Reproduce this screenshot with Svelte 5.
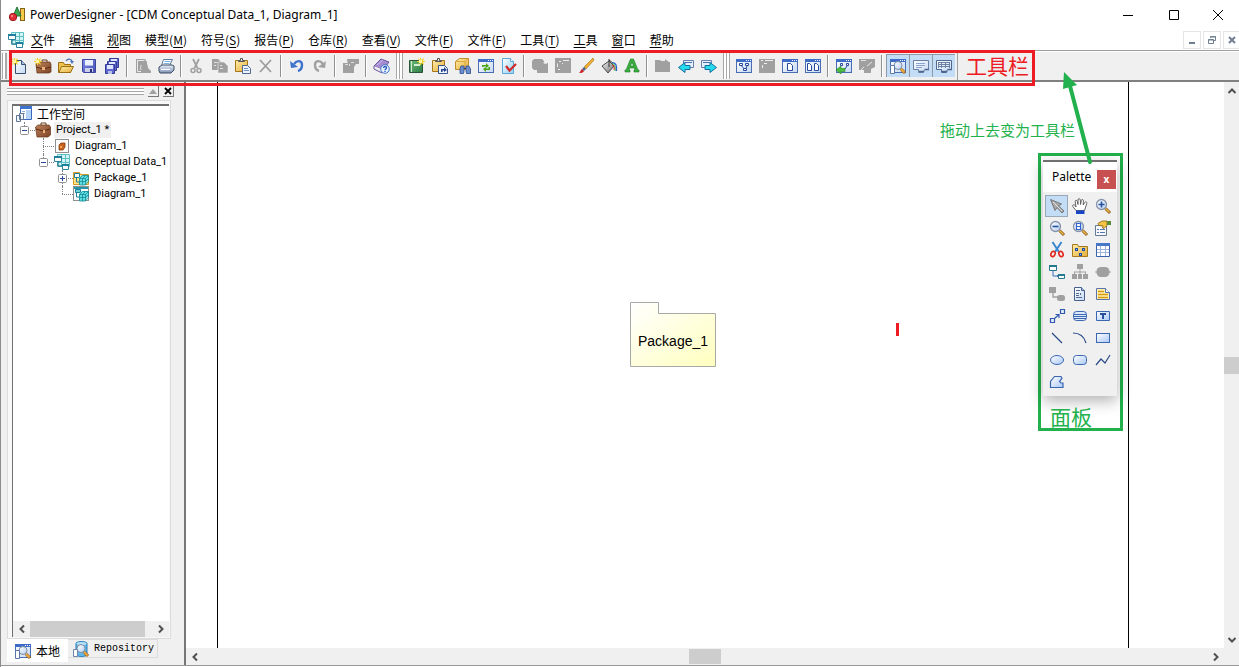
<script>
  // Inner markup of every 16x16 glyph
  const win = '<rect x="0.5" y="1.5" width="15" height="13" fill="url(#paper)" stroke="#4a6cb0"/><path d="M0 1h16v3H0z" fill="#3d6cc8"/><path d="M10 2h1v1h-1zM12 2h1v1h-1zM14 2h1v1h-1z" fill="#fff"/>';
  const spark = '<path d="M0 0l2 2V0h1v2l3-2-1 3h2v1H5l1 3-3-2v2H2V5L0 7l1-3H-1V3h2z" fill="#f3cf2a"/><path d="M1 2h3v3H1z" fill="#fff6a8"/>';
  const lens = '<path d="M11 11l4 4" stroke="#8a5a14" stroke-width="3"/><path d="M11 11l3.5 3.5" stroke="#f2a93b" stroke-width="2"/><circle cx="8" cy="7.5" r="4" fill="url(#glass)" stroke="#7d8aa0"/>';
  const zoomLens = '<path d="M10.5 10.5l4.500 4.500" stroke="#8a5a14" stroke-width="3"/><path d="M10.500 10.500l4 4" stroke="#e9b44c" stroke-width="1.600"/><circle cx="6.500" cy="6.500" r="5" fill="url(#glass)" stroke="#8793a8" stroke-width="1.300"/>';
  const clip = '<path d="M.5 2.500h12v11H.5z" fill="url(#gold)" stroke="#a8761a"/><path d="M3.500 3.500v-1h2v-2h2v2h2v1z" fill="#e8e8e8" stroke="#555"/>';
  const miniDisk = (x, y) => `<path d="M${x + 0.5} ${y + 0.5}h9v9h-9z" fill="#6068d0" stroke="#343b94"/><path d="M${x + 2} ${y + 1}h6v4h-6z" fill="#dfe6ff"/><path d="M${x + 3} ${y + 7}h4v3h-4z" fill="#b9c0e8"/>`;
  const cdm = '<path d="M3.500.5h12v12h-12zM7.500.5v12M11.500.5v12M3.500 4.500h12M3.500 8.500h12" fill="#d3f5f5" stroke="#5ec0c4"/><path d="M4 7v5h5" fill="none" stroke="#17637c"/><path d="M.5 2.500h7v5h-7zM8.500 10.500h6v5h-6z" fill="#fff" stroke="#28849a"/><path d="M0 2h8v2H0zM8 10h7v2H8z" fill="#1f7f9a"/>';
  const cube = '<path d="M6 8l3-3h6v6l-3 4H6z" fill="#5fdfe2"/><path d="M6.500 8.500h6v6.500h-6zM6.500 8.500l3-3h6v6l-3 3.500M12.500 8.500l3-3M9.500 8.500v6.500M6.500 11.500h6l3-3M9.500 8.500l3-3" fill="none" stroke="#168a96" stroke-width=".8"/>';
  const sheet = '<path d="M2.500 1.500h7l3 3v10h-10z" fill="url(#paper)" stroke="#47618c"/><path d="M9.500 1.500v3h3" fill="#b8cbe8" stroke="#47618c"/>';
  const shape = 'fill="url(#sky)" stroke="#3b66b0"';

  const icons = {
    app: '<rect x="11.500" y="1.500" width="4" height="12" fill="#f6c948" stroke="#83621a"/><path d="M8 0l4 9H4z" fill="#3ba550" stroke="#247638"/><circle cx="4" cy="10" r="3.700" fill="#e12d35" stroke="#9d1820"/><circle cx="3" cy="9" r="1" fill="#ff9c9c"/>',
    cdm,
    newDoc: '<path d="M3.500 2.500h6l4 4v9h-10z" fill="url(#paper)" stroke="#38506e"/><path d="M9.500 2.500v4h4" fill="#a9c4e0" stroke="#38506e"/>' + spark,
    newProject: '<path d="M1 6l3-2h11l1 2v8l-2 1H2z" fill="url(#brown)" stroke="#613517" stroke-width=".7"/><path d="M1 9l7 2 8-2" stroke="#562c12" fill="none"/><path d="M7 9h3v3H7z" fill="#efb27b"/><path d="M7 4V2h5v2" stroke="#6b3d1d" fill="none"/>' + spark,
    open: '<path d="M.5 14.500v-10h5l1 2h6v8z" fill="#f0c14c" stroke="#9a6f16"/><path d="M1 14.500l2.500-6h12l-3 6z" fill="url(#gold)" stroke="#9a6f16"/><path d="M8 3c2-3 5-2 6 0" fill="none" stroke="#4b74b8" stroke-width="1.300"/><path d="M12 3h4l-2 3z" fill="#4b74b8"/>',
    save: '<path d="M1.500 1.500h13v13h-12l-1-1z" fill="url(#indigo)" stroke="#3d469c"/><path d="M4 2h8v6H4z" fill="#eaf0ff"/><path d="M4 7h8v1H4z" fill="#a9b6e8"/><path d="M4 10h8v4H4z" fill="#c9cfe8"/><path d="M9 11h2v3H9z" fill="#27307f"/>',
    saveAll: miniDisk(5, 0) + miniDisk(3, 3) + miniDisk(1, 6),
    previewOff: '<path d="M1 1h9l2 3v11H1z" fill="#a0a0a0"/><path d="M4 15V3h6v2c2 0 3 2 3 5l3 3v2z" fill="#a0a0a0"/><path d="M2.500 2.500h7M2.500 2v11.500H6M6 12c-1-2 0-3 0-5" fill="none" stroke="#e9e9e9"/>',
    print: '<path d="M5.500 1.500h9l-3 6h-8z" fill="#fff" stroke="#5e7c9e"/><path d="M6.500 3.500h6M5.500 5.500h6" stroke="#7db2e0"/><path d="M1 9l3-2h10l2 1v4l-3 3H2l-1-2z" fill="url(#steel)" stroke="#3c4c64"/><path d="M3 11.500h9" stroke="#fff"/>',
    cutOff: '<path d="M4 1l4.500 9M10 1L5.500 10" stroke="#a0a0a0" stroke-width="1.800"/><circle cx="4" cy="12.500" r="2" fill="none" stroke="#a0a0a0" stroke-width="1.500"/><circle cx="10" cy="12.500" r="2" fill="none" stroke="#a0a0a0" stroke-width="1.500"/>',
    copyOff: '<path d="M0 1h6l3 3v8H0z" fill="#a0a0a0"/><path d="M6 4h6l4 4v7H6z" fill="#a0a0a0" stroke="#f0f0f0" stroke-width=".6"/><path d="M2 4.500h3M2 7.500h2M8 7.500h2M8 10.500h3" stroke="#e4e4e4"/>',
    paste: clip + '<path d="M7.500 7.500h5l3 3v5h-8z" fill="#eef4ff" stroke="#4e6690"/><path d="M9 10.500h4M9 12.500h5" stroke="#6f8fc4"/>',
    deleteOff: '<path d="M2 2l11 12M13 2L2 14" stroke="#9a9a9a" stroke-width="1.700"/>',
    undo: '<path d="M5 6c3-4 8-4 8 1 0 3-1 5-4 6" fill="none" stroke="#3e73cc" stroke-width="2.400"/><path d="M1 3l1 7 7-1z" fill="#3e73cc"/>',
    redoOff: '<path d="M11 6C8 2 3 2 3 7c0 3 1 5 4 6" fill="none" stroke="#a0a0a0" stroke-width="2.400"/><path d="M14 3l-1 7-7-1z" fill="#a0a0a0"/>',
    propsOff: '<path d="M0 5h11v10H0z" fill="#a0a0a0"/><path d="M4 1h12v5h-3l-2 3H5z" fill="#a0a0a0"/><path d="M2 6.500h3M6.500 6v2M8 4.500h3" stroke="#ddd"/>',
    help: '<path d="M0 8l7-7 8 3-6 8z" fill="#a48bd0" stroke="#6753a0"/><path d="M0 8v3l8 4 2-3" fill="#eee" stroke="#6753a0"/><path d="M3 7l6-5" stroke="#cdbcf0"/><circle cx="11" cy="11" r="4.300" fill="#e7f1ff" stroke="#4775c2"/><path d="M9.500 10c0-2 3-2 3 0 0 1-1.500 1-1.500 2.300M11 13v1" stroke="#2457b8" fill="none" stroke-width="1.300"/>',
    book: '<path d="M.5 2.500h13v12H.5z" fill="url(#green)" stroke="#28543a"/><path d="M2.500 3v11" stroke="#d6e8d6"/><path d="M5 6h6v2H5z" fill="#d4efd4"/><g transform="translate(9 0)">' + spark + '</g>',
    pasteLink: clip + '<path d="M6.500 7.500h6l3 3v5h-9z" fill="#eef4ff" stroke="#37528a"/><path d="M9 14v-3h3V9l3 3-3 2v-1.500h-1.500V14z" fill="#24428c"/>',
    findObject: '<path d="M.5 3.500l4-3h9v7l-3 4H.5z" fill="url(#gold)" stroke="#c08e2a"/><path d="M1 3.500h9v8M10 3.500l3.500-3" fill="none" stroke="#d9a83c"/><path d="M6 8h3v5l-.5 2.500H5V11zM11 8h3l1.500 3v4.500h-4L11 13z" fill="#6b8fd0" stroke="#2c4a8c" stroke-width=".8"/><path d="M9 10.500h2" stroke="#243f80"/>',
    refresh: win + '<path d="M4 9V7h4V5l3 3-3 2V8.500H5.500V9zM12 9v3H8v2l-3-3 3-2v1.500h2.500V9z" fill="#4ea614"/>',
    check: '<path d="M1.500.5h8l3 3v12h-11z" fill="url(#aqua)" stroke="#5aa8d8"/><path d="M9.500.5v3h3" fill="#fff" stroke="#5aa8d8"/><path d="M5 8l3.500 4.500L15 6" fill="none" stroke="#d12a2a" stroke-width="2.200"/>',
    blockOffA: '<path d="M2 1h8l2 2v2h4v10H5v-3H2l-2-2V3z" fill="#a0a0a0"/><path d="M12 4v1.500h3" fill="none" stroke="#d8d8d8"/>',
    blockOffB: '<path d="M0 0h16v15H0z" fill="#a0a0a0"/><path d="M2.500 9V5.500M4 3.500h2M8 2.500h6M3 11.500h2M7 5.500h1" fill="none" stroke="#eee"/>',
    brush: '<path d="M15 0l1 2-8 9-2-2z" fill="#f0b02e" stroke="#a26d12" stroke-width=".6"/><path d="M6 9l2 2-2 2-2-2z" fill="#4c6a90"/><path d="M4 11l2 2c-1 2-3 2-5 2 2-1 1-3 3-4z" fill="#cc2126"/>',
    bucket: '<path d="M1 8l7-5 5 5-6 7z" fill="url(#metal)" stroke="#4d4d4d"/><path d="M8 9V1M8 2l4 3" stroke="#333" fill="none"/><path d="M11 5c4-1 5 3 4.500 8" stroke="#2c5bd6" fill="none" stroke-width="1.300"/><path d="M11 6c3-1 3.500 3 3 7" stroke="#2aaf3a" fill="none"/><path d="M11 7c2 0 2.500 2 2 5" stroke="#e02c2c" fill="none"/>',
    fontColor: '<path d="M1 14v-2h1L6.500 1h3L14 12h1v2h-5v-2h1l-.7-2H5.700L5 12h1v2zM6.500 8h3L8 4z" fill="#37b13b" stroke="#1f7a2b" stroke-width=".6" fill-rule="evenodd"/>',
    folderOff: '<path d="M0 2h5l1 1h4V1l4 3h1v10H0z" fill="#a0a0a0"/>',
    back: '<path d="M5.500 2.500h10v7h-10z" fill="#e7effa" stroke="#6681b0"/><path d="M7 4.500h7" stroke="#4c70ae"/><path d="M.5 9.500L7 4.500v3h5v4H7v3z" fill="#25dcef" stroke="#176e9c"/>',
    forward: '<path d="M.5 2.500h10v7H.5z" fill="#e7effa" stroke="#6681b0"/><path d="M2 4.500h7" stroke="#4c70ae"/><path d="M15.500 9.500L9 4.500v3H4v4h5v3z" fill="#25dcef" stroke="#176e9c"/>',
    viewGraph: win + '<path d="M3.500 5.500h3v2h-3zM9.500 5.500h3v2h-3zM7.500 10.500h3v2h-3z" fill="#fff" stroke="#2849a0"/><path d="M5.500 8l2.500 2.500M11 8l-1 2.500" stroke="#2849a0"/>',
    viewOff: '<path d="M0 1h16v14H0z" fill="#a0a0a0"/><path d="M2 2.500h2M6 2.500h8M3.500 7v3M5 5.500h3" stroke="#eee"/>',
    viewPage: win + '<path d="M5.500 5.500h3l2 2v5h-5z" fill="#fff" stroke="#2849a0"/>',
    viewPages: win + '<path d="M2.500 5.500h2l2 2v5h-4zM9.500 5.500h2l2 2v5h-4z" fill="#fff" stroke="#2849a0"/>',
    modelGo: win + '<path d="M4.500 5.500h2v2h-2zM10.500 5.500h2v2h-2z" fill="#fff" stroke="#2849a0"/><path d="M11 8l-2 3" stroke="#2849a0"/><path d="M0 12l5-4v2.500h4v3H5V16z" fill="#49bf3f" stroke="#267e26" stroke-width=".6"/>',
    modelOff: '<path d="M0 1h16v8l-4 2v4H5v-3H0z" fill="#a0a0a0"/><path d="M2 2.500h5M8 8l5-4M5 9l-3 3" stroke="#e4e4e4"/>',
    browser: win + lens + '<path d="M.5 7.500h4v8h-4z" fill="#fff" stroke="#5b77a8"/>',
    output: '<path d="M.5 2.500h15v9h-4l-1 3h-5v-3h-5z" fill="url(#paper)" stroke="#6a7fa2"/><path d="M6 13.500h5M12 11.500h4" stroke="#50688e" stroke-width="1.400"/><path d="M3 5.500h9M3 7.500h9M3 9.500h6" stroke="#88a4cf"/>',
    results: '<path d="M.5 2.500h15v9h-4l-1 3h-5v-3h-5z" fill="url(#paper)" stroke="#50688e"/><path d="M6 13.500h5M12 11.500h4" stroke="#50688e" stroke-width="1.400"/><path d="M2 4.500h12M2 6.500h12M2 8.500h12M5.500 4v6M9.500 4v6M2.500 4v6M13.500 4v6" stroke="#6c7fa4"/>',
    // tree
    workspace: '<path d="M4.500.5h11v13h-11z" fill="#fff" stroke="#3968bc"/><path d="M4 0h12v3H4z" fill="#3d73d0"/><path d="M10 4h5v9h-5z" fill="#b6d3f8"/><path d="M6 5.500h3M6 7.500h3" stroke="#8cabdf"/><path d="M3.500 7.500h4v6h-4zM.5 9.500h4v6h-4z" fill="#f2f6fb" stroke="#607694"/>',
    project: '<path d="M6 3V1h5v2" stroke="#6b3d1d" fill="none"/><path d="M.5 5L3 3h11l1.500 2v8L13 15H2z" fill="url(#brown)" stroke="#613517" stroke-width=".7"/><path d="M1 7l7 2 7-2" stroke="#562c12" fill="none"/><path d="M8 8h2v3H8z" fill="#efb27b"/>',
    projectDiagram: '<rect x="1.500" y="1.500" width="13" height="13" fill="#fff" stroke="#8f8f8f"/><path d="M5 7l2-2h4v4l-2 3H5z" fill="#c9631d" stroke="#853a0c" stroke-width=".8"/><path d="M6 8h2v2H6z" fill="#f3a862"/>',
    package: '<path d="M.5 14.500v-12h6l1 2h8v10z" fill="#ffe188" stroke="#d59b24"/><path d="M1.500 3.500h5v4h-5z" fill="#fff" stroke="#1f7f9a"/><path d="M3.500 8v4H6" fill="none" stroke="#1f7f9a"/>' + cube,
    diagram: '<rect x=".5" y=".5" width="15" height="14" fill="#fff" stroke="#909090"/><path d="M2.500 3.500h5v3h-5z" fill="#6ed3d8" stroke="#1f7f9a"/><path d="M1 1h14v2H1z" fill="#2b93a7"/><path d="M3.500 7v4H6" fill="none" stroke="#1f7f9a"/>' + cube,
    repository: '<path d="M3 2c2-2 9-2 11 0v12c-2 2-9 2-11 0z" fill="#62b7ea" stroke="#2b7bb8"/><ellipse cx="8.500" cy="2.500" rx="5" ry="1.500" fill="#b9e3fa"/>' + lens + '<path d="M.5 8.500h4v7h-4z" fill="#fff" stroke="#6f86a8"/>',
    // palette
    pointer: '<path d="M1.500 1.500l4.500 11 2-3 5 5.500 2-2-5.500-5 3-2z" fill="#a9a9a9" stroke="#777"/><path d="M4 4l9 9" stroke="#ddd"/>',
    hand: '<path d="M4 12.500L.8 8.500C0 7 1.800 6 3 7.500L4 9 3.200 3.500C3 2 4.800 1.800 5.200 3.200L6 6.500 6 2C6 .2 8.200.2 8.300 2L8.500 6.500 9.300 2.500C9.600 1 11.500 1.300 11.400 2.800L11.200 7 12.800 4.500C13.600 3.200 15.200 4 14.800 5.500L12.500 12.500z" fill="#fff" stroke="#555" stroke-width=".9"/><path d="M4 12.500h8.500V16H4z" fill="#1745c5"/>',
    zoomIn: zoomLens + '<path d="M3.500 6.500h6M6.500 3.500v6" stroke="#27509c" stroke-width="1.600"/>',
    zoomOut: zoomLens + '<path d="M3.500 6.500h6" stroke="#27509c" stroke-width="1.600"/>',
    zoomPage: zoomLens + '<path d="M4.500 3.500h4v6h-4zM4.500 6.500h4" fill="#fff" stroke="#3464d0" stroke-width="1.200"/>',
    properties: '<path d="M.5 5.500h11v10H.5z" fill="#f6f8fc" stroke="#657895"/><path d="M2 9.500h2M5 9.500h5M2 12.500h2M5 12.500h5" stroke="#5378b8"/><path d="M3 3.500L7 1h5v4.500L9 8.500 7.500 8 8 6l-4-.5z" fill="#f3c443" stroke="#8a6312" stroke-width=".8"/><path d="M12 1h4v4h-4z" fill="#5b8c3a"/>',
    cut: '<path d="M3.500 0L10 10M12.500 0L6 10" stroke="#3b87d0" stroke-width="2"/><ellipse cx="4" cy="12" rx="2" ry="2.700" transform="rotate(25 4 12)" fill="none" stroke="#e3261c" stroke-width="1.600"/><ellipse cx="12" cy="12" rx="2" ry="2.700" transform="rotate(-25 12 12)" fill="none" stroke="#e3261c" stroke-width="1.600"/>',
    packageTool: '<path d="M.5 14.500v-12h5l1 2h9v10z" fill="url(#gold)" stroke="#a47a1c"/><path d="M3 6h3v3H3zM10 6h3v3h-3zM7 11h3v3H7z" fill="#214ea0"/><path d="M4 7h1v1H4zM11 7h1v1h-1zM8 12h1v1H8z" fill="#9fc0f4"/>',
    entity: '<path d="M1.500 1.500h13v13h-13z" fill="#fff" stroke="#3b62aa"/><path d="M1 1h14v3H1z" fill="#4777c8"/><path d="M2 7.500h12M2 10.500h12M5.500 4v10M10.500 4v10" stroke="#a0b5dc"/>',
    relation: '<path d="M4 7v5h5M8 12l2-2M8 12l2 2" fill="none" stroke="#3f6fbd"/><path d="M.5 1.500h7v5h-7zM9.500 10.500h6v4h-6z" fill="#fff" stroke="#26798e"/><path d="M0 1h8v2H0zM9 10h7v2H9z" fill="#26798e"/>',
    inheritOff: '<path d="M5 0h6v5H5zM0 10h5v5H0zM6 10h4v5H6zM11 10h5v5h-5zM7.500 5h1v5h-1zM2 7.500h12V10h-1V8.500H3V10H2z" fill="#a0a0a0"/>',
    associationOff: '<rect x="1.500" y="3" width="13" height="10" rx="4.500" fill="#a0a0a0"/><path d="M0 8h16" stroke="#a0a0a0"/>',
    assocLinkOff: '<path d="M0 1h7v6H0z" fill="#a0a0a0"/><path d="M4 6v5h5" fill="none" stroke="#a0a0a0" stroke-width="1.400"/><rect x="8" y="9" width="8" height="6" rx="2.500" fill="#a0a0a0"/>',
    file: sheet + '<path d="M4 4.500h4M4 7.500h3M8.500 7v2M4 9.500h3M4 11.500h6" stroke="#526a90"/>',
    note: '<path d="M1.500 2.500h9l4 4v7h-13z" fill="#fff1b2" stroke="#5873ad"/><path d="M10.500 2.500v4h4" fill="#fff" stroke="#5873ad"/><path d="M3 5.500h6M3 8.500h10M3 11.500h10" stroke="#d69b12" stroke-width="1.300"/>',
    link: '<path d="M1.500 10.500h4v4h-4zM11.500 1.500h4v4h-4z" fill="#e3edff" stroke="#3159ae" stroke-width="1.200"/><path d="M5.500 10.500L10 6.500M6.500 6.500H10V10" fill="none" stroke="#3159ae" stroke-width="1.200"/>',
    title: '<rect x="1.500" y="3.500" width="13" height="9" rx="3" fill="#dce9fc" stroke="#3b66b0"/><path d="M2 6.500h12M1 8.500h14M2 10.500h12" stroke="#3b66b0"/>',
    textBox: '<path d="M1.500 3.500h13v9h-13z" fill="url(#sky)" stroke="#3b66b0"/><path d="M5 6h6M8 6v5" stroke="#284f9c" stroke-width="2"/>',
    line: '<path d="M3 3l10 10" stroke="#2d4a88" stroke-width="1.200"/>',
    arc: '<path d="M1 3c6 0 11 3 13 10" fill="none" stroke="#2d4a88" stroke-width="1.200"/>',
    rect: `<rect x="1.500" y="3.500" width="13" height="9" ${shape}/>`,
    ellipse: `<ellipse cx="8" cy="8" rx="6.500" ry="4.500" ${shape}/>`,
    rounded: `<rect x="1.500" y="3.500" width="13" height="9" rx="3" ${shape}/>`,
    polyline: '<path d="M1 13l5-6 4 4 5-8" fill="none" stroke="#2d4a88" stroke-width="1.200"/>',
    polygon: `<path d="M1.500 13.500V7.500l4-5h6.500l1 2-2.500 3 1.500 1.500h2v4.500z" ${shape} stroke-width="1.200"/>`
  };

  const menus = [
    ['', '文', '件'], ['', '编辑', ''], ['', '视', '图'], ['模型(', 'M', ')'], ['符号(', 'S', ')'],
    ['报告(', 'P', ')'], ['仓库(', 'R', ')'], ['查看(', 'V', ')'], ['文件(', 'F', ')'], ['文件(', 'F', ')'],
    ['工具(', 'T', ')'], ['', '工', '具'], ['', '窗', '口'], ['', '帮', '助']
  ];

  const bars = [
    [['newDoc', 'newProject', 'open', 'save', 'saveAll'], ['previewOff', 'print'], ['cutOff', 'copyOff', 'paste', 'deleteOff'], ['undo', 'redoOff'], ['propsOff'], ['help']],
    [['book', 'pasteLink', 'findObject', 'refresh', 'check'], ['blockOffA', 'blockOffB', 'brush', 'bucket', 'fontColor'], ['folderOff', 'back', 'forward']],
    [['viewGraph', 'viewOff', 'viewPage', 'viewPages'], ['modelGo', 'modelOff'], ['browser', 'output', 'results']]
  ];
  const pressed = ['browser', 'output', 'results'];

  const tools = [
    'pointer', 'hand', 'zoomIn', 'zoomOut', 'zoomPage', 'properties', 'cut', 'packageTool', 'entity',
    'relation', 'inheritOff', 'associationOff', 'assocLinkOff', 'file', 'note', 'link', 'title', 'textBox',
    'line', 'arc', 'rect', 'ellipse', 'rounded', 'polyline', 'polygon'
  ];
  let tool = $state('pointer');

  const tree = [
    { label: '工作空间', icon: 'workspace', depth: 0 },
    { label: 'Project_1 *', icon: 'project', depth: 1, box: '-', last: true, selected: true },
    { label: 'Diagram_1', icon: 'projectDiagram', depth: 2 },
    { label: 'Conceptual Data_1', icon: 'cdm', depth: 2, box: '-', last: true },
    { label: 'Package_1', icon: 'package', depth: 3, box: '+' },
    { label: 'Diagram_1', icon: 'diagram', depth: 3, last: true }
  ];
</script>

{#snippet glyph(name)}
  <svg class="glyph" viewBox="0 0 16 16" aria-hidden="true">{@html icons[name]}</svg>
{/snippet}

{#snippet chevron(dir)}
  <button class="chev {dir}" aria-label={dir}>
    <svg viewBox="0 0 10 10" aria-hidden="true"><path d="M1.500 7L5 3.500 8.500 7" /></svg>
  </button>
{/snippet}

<svg class="defs" aria-hidden="true">
  <defs>
    <linearGradient id="paper" x2="1" y2="1"><stop stop-color="#fff" /><stop offset="1" stop-color="#c4d8f4" /></linearGradient>
    <linearGradient id="sky" x2="1" y2="1"><stop stop-color="#fff" /><stop offset="1" stop-color="#a9c8f8" /></linearGradient>
    <linearGradient id="gold" x2="1" y2="1"><stop stop-color="#ffedaa" /><stop offset="1" stop-color="#e6ae38" /></linearGradient>
    <linearGradient id="brown" x2="1" y2="1"><stop stop-color="#bd805a" /><stop offset="1" stop-color="#7d4526" /></linearGradient>
    <linearGradient id="indigo" x2="1" y2="1"><stop stop-color="#7f8bea" /><stop offset="1" stop-color="#444db0" /></linearGradient>
    <linearGradient id="green" x2="1" y2="1"><stop stop-color="#6fbf7b" /><stop offset="1" stop-color="#2c7a44" /></linearGradient>
    <linearGradient id="steel" x2="0" y2="1"><stop stop-color="#e8eef8" /><stop offset="1" stop-color="#7f93b4" /></linearGradient>
    <linearGradient id="metal" x2="1" y2="1"><stop stop-color="#f4f4f4" /><stop offset="1" stop-color="#6f6f6f" /></linearGradient>
    <linearGradient id="aqua" x2="1" y2="1"><stop stop-color="#fff" /><stop offset="1" stop-color="#8fd0f4" /></linearGradient>
    <linearGradient id="glass" x2="1" y2="1"><stop stop-color="#fff" /><stop offset="1" stop-color="#b4d0f2" /></linearGradient>
  </defs>
</svg>

<div class="app">
  <header class="title">
    {@render glyph('app')}
    <h1>PowerDesigner - [CDM Conceptual Data_1, Diagram_1]</h1>
    <div class="caption">
      <button aria-label="Minimize"><svg viewBox="0 0 12 12"><path d="M1 6.500h10" /></svg></button>
      <button aria-label="Maximize"><svg viewBox="0 0 12 12"><path d="M1.500 1.500h9v9h-9z" /></svg></button>
      <button aria-label="Close"><svg viewBox="0 0 12 12"><path d="M1 1l10 10M11 1L1 11" /></svg></button>
    </div>
  </header>

  <nav class="menu">
    {@render glyph('cdm')}
    <div class="items">
      {#each menus as [pre, key, post]}
        <button>{pre}<u>{key}</u>{post}</button>
      {/each}
    </div>
    <div class="mdi">
      <button aria-label="Minimize document"><svg viewBox="0 0 10 10"><path d="M2 8h6" stroke-width="2" /></svg></button>
      <button aria-label="Restore document"><svg viewBox="0 0 10 10"><path d="M3.500 3V1.500h5v4H7M1.500 4.500h5v4h-5zM1 5h6M3 2h6" /></svg></button>
      <button aria-label="Close document"><svg viewBox="0 0 10 10"><path d="M2 2l6 6M8 2L2 8" stroke-width="2" /></svg></button>
    </div>
  </nav>

  <div class="toolbar">
    <div class="bars">
      {#each bars as bar}
        <div class="bar">
          <span class="grip"></span>
          {#each bar as group, g}
            {#if g > 0}<span class="sep"></span>{/if}
            {#each group as name}
              <button class="tool" class:on={pressed.includes(name)} aria-label={name}>{@render glyph(name)}</button>
            {/each}
          {/each}
        </div>
      {/each}
      <div class="mark-red"><span>工具栏</span></div>
    </div>
  </div>

  <div class="main">
    <aside>
      <div class="dock">
        <span class="lines"></span>
        <button aria-label="Collapse"><svg viewBox="0 0 10 10"><path d="M5 3l4 5H1z" fill="#a0a0a0" /></svg></button>
        <button aria-label="Close browser"><svg viewBox="0 0 10 10"><path d="M2 2l6 6M8 2L2 8" stroke="#000" stroke-width="1.800" /></svg></button>
      </div>
      <div class="frame">
        <div class="well">
          <ul>
            {#each tree as row}
              <li>
                {#each { length: row.depth } as _, d}
                  <span class="guide" class:branch={d === row.depth - 1} class:last={row.last}>
                    {#if row.box && d === row.depth - 1}
                      <svg class="box" viewBox="0 0 9 9"><rect x=".5" y=".5" width="8" height="8" rx="1" fill="#fff" stroke="#919191" /><path d={row.box === '+' ? 'M2 4.500h5M4.500 2v5' : 'M2 4.500h5'} stroke="#2b4a9c" /></svg>
                    {/if}
                  </span>
                {/each}
                {@render glyph(row.icon)}
                <span class="label" class:selected={row.selected} class:cjk={row.depth === 0}>{row.label}</span>
              </li>
            {/each}
          </ul>
          <div class="hscroll">
            {@render chevron('left')}
            <span class="track"><span class="thumb"></span></span>
            {@render chevron('right')}
          </div>
        </div>
      </div>
      <div class="tabs">
        <button class="tab active">{@render glyph('browser')}本地</button>
        <button class="tab mono">{@render glyph('repository')}Repository</button>
      </div>
    </aside>

    <section class="view">
      <div class="canvas">
        <div class="page">
          <div class="package">
            <svg viewBox="0 0 86 65" aria-hidden="true">
              <defs><linearGradient id="pkg" x2="1" y2="1"><stop stop-color="#fff" /><stop offset="1" stop-color="#ffffbe" /></linearGradient></defs>
              <path d="M.5.5h28v11h57v53H.5z" fill="url(#pkg)" stroke="#a8a8a8" />
            </svg>
            <span>Package_1</span>
          </div>
          <i class="tick"></i>
        </div>
      </div>
      <div class="vscroll">
        {@render chevron('up')}
        <span class="track"><span class="thumb"></span></span>
        {@render chevron('down')}
      </div>
      <div class="hscroll">
        {@render chevron('left')}
        <span class="track"><span class="thumb"></span></span>
        {@render chevron('right')}
      </div>
    </section>
  </div>

  <p class="note">拖动上去变为工具栏</p>
  <div class="mark-green">
    <div class="palette">
      <div class="palette-title">Palette<button aria-label="Close palette">x</button></div>
      <div class="grid">
        {#each tools as name}
          <button class:on={tool === name} aria-label={name} onclick={() => (tool = name)}>{@render glyph(name)}</button>
        {/each}
      </div>
    </div>
    <span class="mark-label">面板</span>
  </div>
  <svg class="arrow" viewBox="0 0 40 96" aria-hidden="true">
    <path d="M9 14L29 90" stroke="#22b14c" stroke-width="4" stroke-linecap="round" />
    <path d="M3 0L16 13 2 17z" fill="#22b14c" />
  </svg>
</div>

<style>
  :global(body) { margin: 0; background: #fff; }
  * { box-sizing: border-box; }
  button { padding: 0; border: 0; background: none; font: inherit; color: inherit; }
  svg { display: block; }
  .defs { position: absolute; width: 0; height: 0; }
  .glyph { width: 16px; height: 16px; flex: none; overflow: visible; }

  .app {
    position: relative;
    display: flex;
    flex-direction: column;
    height: 100vh;
    overflow: hidden;
    border-left: 1px solid #8c8c8c;
    padding-bottom: 1px;
    color: #000;
    font: 12px/16px "Noto Sans", "Noto Sans CJK SC", sans-serif;
  }

  .title { display: flex; align-items: center; height: 30px; flex: none; padding-left: 8px; gap: 5px; }
  h1 { margin: 0; flex: 1; font: 12px/16px "Noto Sans", sans-serif; }
  .caption { display: flex; }
  .caption button { width: 46px; height: 28px; display: grid; place-items: center; }
  .caption button:last-child { width: 42px; }
  .caption svg { width: 12px; height: 12px; fill: none; stroke: #000; }

  .menu { display: flex; align-items: center; height: 20px; flex: none; padding-left: 7px; gap: 7px; }
  .items { display: flex; flex: 1; gap: 14px; font-family: "Noto Sans CJK SC", sans-serif; white-space: nowrap; }
  .items u { text-underline-offset: 2px; }
  .mdi { display: flex; gap: 2px; margin-right: -2px; }
  .mdi button { width: 18px; height: 18px; display: grid; place-items: center; border: 1px solid #e5e5e5; }
  .mdi svg { width: 10px; height: 10px; fill: none; stroke: #6e8090; }

  .toolbar {
    display: flex;
    height: 32px;
    flex: none;
    background: #f0f0f0;
    border-top: 1px solid #a0a0a0;
    border-bottom: 2px solid #808080;
    box-shadow: inset 0 1px #fff;
  }
  .bars { position: relative; display: flex; border-right: 1px solid #a0a0a0; padding-right: 2px; }
  .bar { display: flex; align-items: center; }
  .grip { width: 7px; height: 26px; margin: 0 2px 0 3px; border: solid #a8a8a8; border-width: 0 1px; background: linear-gradient(90deg, #fff 2px, #a8a8a8 2px, #a8a8a8 3px, #fff 3px); }
  .bar:first-child .grip { width: 5px; margin: 0 1px 0 1px; }
  .sep { width: 2px; height: 22px; margin: 0 3px; border-left: 1px solid #909090; background: #fff; }
  .tool { width: 23px; height: 23px; display: grid; place-items: center; }
  .tool.on { background: #c2ddf5; border: solid #8f9aa6; border-width: 1px 0 0 1px; }
  .mark-red {
    position: absolute;
    inset: -1px -78px -6px 8px;
    border: 3px solid #ed1c24;
    display: flex;
    align-items: center;
    justify-content: flex-end;
    padding: 0 3px 6px 0;
    color: #ed1c24;
    font: 21px/26px "Noto Sans CJK SC", sans-serif;
    pointer-events: none;
    z-index: 2;
  }

  .main { display: flex; flex: 1; min-height: 0; border-bottom: 1px solid #999; background: #f0f0f0; }
  aside { display: flex; flex-direction: column; width: 185px; flex: none; padding: 0 13px 3px 6px; border-right: 2px solid #777; }
  .dock { display: flex; align-items: center; gap: 4px; height: 18px; flex: none; margin-right: -3px; }
  .lines { flex: 1; height: 7px; border: solid #a8a8a8; border-width: 1px 0; background: linear-gradient(#fff 2px, #a8a8a8 2px, #a8a8a8 3px, #fff 3px); }
  .dock button { width: 11px; height: 12px; display: grid; place-items: center; border: solid #777; border-width: 0 1px 1px 0; }
  .dock svg { width: 10px; height: 10px; }
  .frame { flex: 1; display: flex; padding: 3px 1px 1px 4px; border: 1px solid #dcdcdc; background: #f8f8f8; min-height: 0; }
  .well { flex: 1; min-width: 0; display: flex; flex-direction: column; justify-content: space-between; background: #fff; border: solid #6f6f6f; border-width: 2px 0 0 1px; }
  ul { margin: 0; padding: 0 0 0 3px; list-style: none; overflow: hidden; }
  li { display: flex; align-items: center; height: 16px; }
  .guide { position: relative; width: 19px; height: 16px; flex: none; }
  .branch::before { content: ""; position: absolute; left: 8px; top: 0; bottom: 0; border-left: 1px dotted #808080; }
  .branch.last::before { bottom: 8px; }
  .branch::after { content: ""; position: absolute; left: 8px; right: 0; top: 8px; border-top: 1px dotted #808080; }
  .box { position: absolute; left: 4px; top: 4px; width: 9px; height: 9px; z-index: 1; }
  .label { margin-left: 3px; padding: 0 2px; font: 11px/16px Roboto, Arial, sans-serif; white-space: nowrap; }
  .label.cjk { font: 12px/16px "Noto Sans CJK SC", sans-serif; }
  .label.selected { background: #f0f0f0; }

  .hscroll, .vscroll { display: flex; background: #f0f0f0; }
  .track { flex: 1; display: grid; place-items: center; }
  .thumb { display: block; background: #cdcdcd; }
  .well .hscroll { height: 16px; }
  .well .thumb { width: 115px; height: 16px; justify-self: start; }
  .chev { width: 17px; height: 100%; display: grid; place-items: center; }
  .chev svg { width: 10px; height: 10px; fill: none; stroke: #505050; stroke-width: 2; }
  .left svg { transform: rotate(-90deg); }
  .right svg { transform: rotate(90deg); }
  .down svg { transform: rotate(180deg); }

  .tabs { display: flex; align-items: flex-start; height: 23px; flex: none; }
  .tab { display: flex; align-items: center; gap: 5px; height: 19px; padding: 0 3px 0 5px; border: 1px solid #dcdcdc; border-left-width: 0; font-family: "Noto Sans CJK SC", sans-serif; }
  .tab.active { height: 23px; padding: 0 8px; background: #fff; border: 0; }
  .tab.mono { font: 10px/16px "Liberation Mono", monospace; }

  .view { flex: 1; min-width: 0; display: grid; grid-template: 1fr 17px / 1fr 15px; }
  .canvas { background: #fff; padding: 0 95px 0 31px; }
  .page { position: relative; height: 100%; border: solid #000; border-width: 0 1px; }
  .package { position: absolute; left: 50%; top: 220px; width: 86px; height: 65px; margin-left: -43px; display: grid; }
  .package svg { grid-area: 1 / 1; width: 86px; height: 65px; }
  .package span { grid-area: 1 / 1; place-self: end center; padding-bottom: 16px; font: 14px/20px "Liberation Sans", Arial, sans-serif; }
  .tick { position: absolute; right: 229px; top: 241px; width: 3px; height: 13px; background: #ed1c24; }
  .vscroll { flex-direction: column; }
  .vscroll .chev { width: 15px; height: 17px; }
  .vscroll .thumb { width: 15px; height: 17px; }
  .view > .hscroll .thumb { width: 32px; height: 15px; }

  .note { position: absolute; right: 164px; top: 119px; margin: 0; color: #22b14c; font: 15px/22px "Noto Sans CJK SC", sans-serif; }
  .mark-green { position: absolute; right: 116px; top: 153px; width: 85px; height: 278px; padding: 4px 2px 0; border: 3px solid #22b14c; display: flex; flex-direction: column; }
  .palette { width: 74px; height: 236px; flex: none; background: #f0f0f0; border-top: 2px solid #707070; box-shadow: 0 5px 14px rgba(0, 0, 0, 0.3); }
  .palette-title { display: flex; align-items: center; justify-content: space-between; height: 30px; padding: 0 1px 0 9px; background: #fff; }
  .palette-title button { width: 19px; height: 19px; margin-top: 4px; background: #c75050; color: #fff; font-weight: bold; font-size: 10px; line-height: 16px; }
  .grid { display: grid; grid-template-columns: repeat(3, 23px); grid-auto-rows: 22px; padding: 3px 2px; }
  .grid button { display: grid; place-items: center; }
  .grid .on { background: #c2ddf5; border: 1px solid #9aa7b4; }
  .mark-label { padding: 5px 0 0 7px; color: #22b14c; font: 21px/30px "Noto Sans CJK SC", sans-serif; }
  .arrow { position: absolute; right: 138px; top: 72px; width: 40px; height: 96px; z-index: 3; fill: none; pointer-events: none; }
</style>
